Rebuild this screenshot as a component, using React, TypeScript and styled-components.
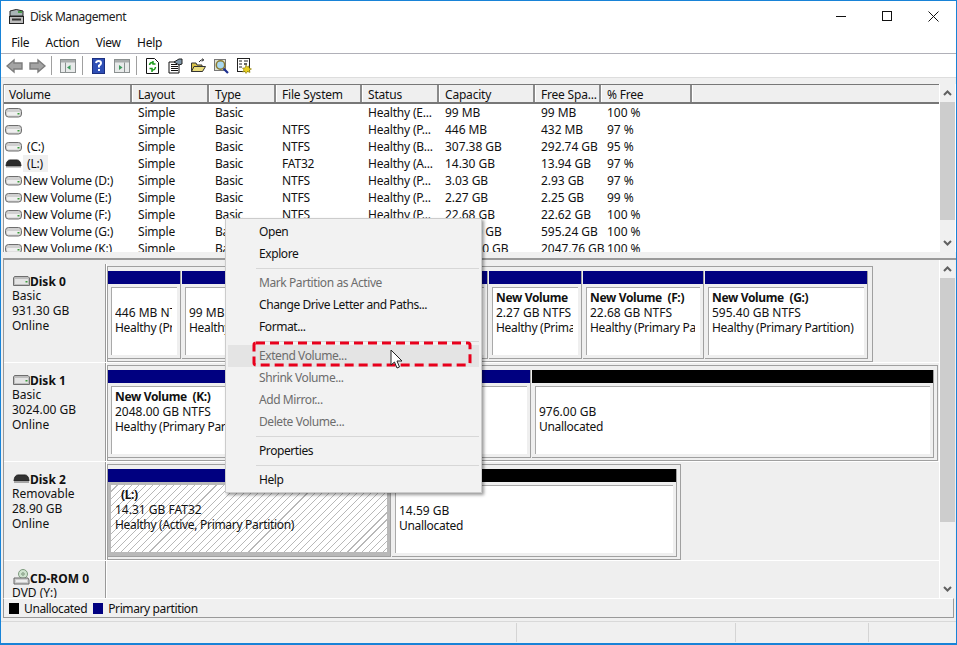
import React from "react";
import styled, { createGlobalStyle } from "styled-components";

const Global = createGlobalStyle`
  html, body { margin: 0; padding: 0; background: #fff; overflow: hidden; }
  #root { width: 957px; height: 645px; }
  * { box-sizing: border-box; }
`;
const UI = `"Noto Sans", "Open Sans", sans-serif`;

const Win = styled.div`
  position: relative; width: 957px; height: 645px; display: flex; flex-direction: column;
  border: 1px solid #1883d7; border-bottom-width: 2px; font-family: ${UI}; font-size: 12px; letter-spacing: -0.2px; color: #111; background: #f0f0f0; overflow: hidden;
`;
const TitleBar = styled.div`
  height: 30px; background: #fff; display: flex; align-items: center; padding: 0 0 0 7px; gap: 5px; flex: none;
`;
const TitleText = styled.span` flex: 1; color: #222; letter-spacing: -0.45px; `;
const WinBtns = styled.div` display: flex; flex: none; `;
const WinBtn = styled.div` width: 46px; height: 30px; flex: none; display: flex; align-items: center; justify-content: center; `;
const MenuBar = styled.div`
  height: 23px; background: #fff; display: flex; align-items: center; padding-left: 2px; flex: none; border-bottom: 1px solid #b0b0b8;
`;
const MenuItem = styled.span` padding: 0 8.2px; letter-spacing: -0.3px; `;
const ToolBar = styled.div`
  height: 23px; background: #fff; display: flex; align-items: center; padding-left: 5px; flex: none;
`;
const ToolSlot = styled.div<{ $l: number }>` margin-left: ${p => p.$l}px; display: flex; flex: none; `;
const ToolSep = styled.div<{ $l: number }>` width: 1px; height: 19px; background: #a0a0a0; margin-left: ${p => p.$l}px; flex: none; `;
const Gap = styled.div` height: 7px; background: #f0f0f0; border-top: 1px solid #ddd; flex: none; `;

const ListPane = styled.div` height: 168px; display: flex; flex: none; margin-left: 2px; border-left: 1px solid #999; background: #fff; `;
const ListMain = styled.div` flex: 1; display: flex; flex-direction: column; overflow: hidden; min-width: 0; `;
const Columns = `128px 77px 67px 86px 77px 96px 66px 91px 1fr`;
const HeadRow = styled.div`
  display: grid; grid-template-columns: ${Columns}; height: 20px; background: #efefef; border-top: 1px solid #777; border-bottom: 2px solid #777; flex: none;
`;
const HeadCell = styled.div`
  padding-left: 5px; line-height: 19px; border-right: 2px solid #8a8a8a; border-left: 1px solid #fff; white-space: nowrap; overflow: hidden;
  &:first-child { padding-left: 4px; }
  &:last-child { border-right: 0; }
`;
const Rows = styled.div` flex: 1; overflow: hidden; `;
const Row = styled.div`
  display: grid; grid-template-columns: ${Columns}; height: 17px; line-height: 17px; white-space: nowrap;
`;
const Cell = styled.div<{ $num?: boolean }>` padding-left: 6px; letter-spacing: ${p => (p.$num ? "-0.05px" : "-0.2px")}; `;
const VolCell = styled.div` display: flex; align-items: center; padding-left: 1px; overflow: hidden; `;
const VolName = styled.span<{ $sel?: boolean; $pad?: boolean }>`
  background: ${p => (p.$sel ? "#f0f0f0" : "transparent")};
  margin-left: 1px;
  padding: 0 ${p => (p.$sel ? "5px" : "0")} 0 ${p => (p.$pad ? "4px" : "0")};
`;
const Scroll = styled.div` width: 16px; flex: none; background: #f0f0f0; display: flex; flex-direction: column; margin-right: 1px; border-left: 1px solid #fff; `;
const ScrollBtn = styled.div` height: 18px; display: flex; align-items: center; justify-content: center; flex: none; `;
const Thumb = styled.div<{ $h: number }>` height: ${p => p.$h}px; background: #cdcdcd; flex: none; `;
const ScrollRest = styled.div` flex: 1; `;

const Splitter = styled.div` height: 8px; background: #f0f0f0; border-bottom: 2px solid #999; margin-left: 2px; flex: none; `;

const GraphPane = styled.div` height: 338px; display: flex; flex: none; margin-left: 2px; border-left: 1px solid #999; background: #efefef; `;
const GraphMain = styled.div` flex: 1; display: flex; flex-direction: column; overflow: hidden; min-width: 0; padding-top: 4px; `;
const Disk = styled.div<{ $h: number }>`
  height: ${p => p.$h}px; display: flex; flex: none; border-bottom: 1px solid #fff;
`;
const DiskInfo = styled.div`
  width: 102px; flex: none; padding: 9px 0 0 8px; line-height: 15px; border-right: 1px solid #999; box-shadow: 1px 0 0 #fff;
`;
const DiskName = styled.div` font-weight: 700; letter-spacing: 0; display: flex; align-items: center; margin-left: 1px; margin-top: 1px; margin-bottom: -1px; `;
const DiskLine = styled.div` letter-spacing: 0; `;
const DiskTrack = styled.div` flex: 1; padding: 2px 0 0 1px; display: flex; align-items: flex-start; min-width: 0; `;
const DiskFrame = styled.div<{ $w: number }>`
  width: ${p => p.$w}px; height: 96px; border: 1px solid #a0a0a0; display: flex; gap: 1px; padding: 4px 0 2px 0; flex: none;
`;
const Part = styled.div<{ $w: number }>`
  width: ${p => p.$w}px; flex: none; display: flex; flex-direction: column; border-right: 1px solid #a0a0a0; border-bottom: 1px solid #a0a0a0;
`;
const Bar = styled.div<{ $black?: boolean }>` height: 13px; background: ${p => (p.$black ? "#000" : "#000080")}; flex: none; `;
const PartBody = styled.div<{ $sel?: boolean }>`
  flex: 1; padding: 3px 3px ${p => (p.$sel ? "4px" : "3px")} 3px; display: flex; min-height: 0;
  background: ${p => (p.$sel ? "#b9b9b9" : "#efefef")};
`;
const PartInner = styled.div`
  flex: 1; min-width: 0; overflow: hidden; background-color: #fff; padding: 2px 5px 0 3px; line-height: 15px; white-space: nowrap;
  border-top: 1px solid #a9a9a9; border-left: 1px solid #a9a9a9;
`;
const HatchInner = styled.div`
  flex: 1; min-width: 0; overflow: hidden; padding: 2px 3px 0 4px; line-height: 15px; white-space: nowrap; background-color: #fff;
  background-image: repeating-linear-gradient(135deg, #fff 0, #fff 4.2px, #b8b8b8 4.2px, #b8b8b8 5px);
`;
const PartTitle = styled.div<{ $indent?: boolean }>` font-weight: 700; height: 15px; white-space: pre; letter-spacing: -0.35px; overflow: hidden; padding-left: ${p => (p.$indent ? "6px" : "0")}; `;
const PartLine = styled.div<{ $first?: boolean; $num?: boolean }>` margin-top: ${p => (p.$first ? "15px" : "0")}; overflow: hidden; letter-spacing: ${p => (p.$num ? "0" : "-0.3px")}; `;
const Legend = styled.div`
  height: 20px; background: #f0f0f0; display: flex; align-items: center; margin: 0 2px; padding-left: 5px; gap: 5px; border-left: 1px solid #999; border-right: 1px solid #999; border-bottom: 1px solid #999; border-top: 1px solid #fff; flex: none;
`;
const LegendText = styled.span` letter-spacing: -0.38px; margin-right: 1px; `;
const Swatch = styled.span<{ $c: string }>` width: 10px; height: 11px; background: ${p => p.$c}; display: inline-block; `;
const StatusBar = styled.div`
  flex: 1; background: #f0f0f0; display: flex; justify-content: flex-end; padding: 1px 2px 1px 0; border-top: 1px solid #d9d9d9; margin-top: 3px;
`;
const StatusCell = styled.div<{ $w: number }>` width: ${p => p.$w}px; border-left: 1px solid #d4d4d4; `;

const Menu = styled.div`
  position: absolute; left: 224px; top: 217px; width: 257px; height: 275px; background: #f2f2f2; border: 1px solid #ccc; box-shadow: 2px 2px 3px rgba(0,0,0,.4); padding: 2px; color: #111; letter-spacing: -0.42px;
`;
const MItem = styled.div<{ $off?: boolean; $hl?: boolean }>`
  height: 22px; line-height: 22px; padding-left: 31px; color: ${p => (p.$off ? "#6d6d6d" : "#111")}; background: ${p => (p.$hl ? "#e4e4e4" : "transparent")};
`;
const MSep = styled.div` height: 7px; margin-left: 28px; display: flex; align-items: center; &::after { content: ""; flex: 1; height: 1px; background: #d7d7d7; } `;
const Dash = styled.svg` position: absolute; left: 250px; top: 339px; `;
const Cursor = styled.svg` position: absolute; left: 389px; top: 348px; `;

const DriveIcon = ({ dark }: { dark?: boolean }) => (
  <svg width="17" height="11" viewBox="0 0 17 11" style={{ flex: "none" }}>
    {dark ? (
      <>
        <path d="M1 8 Q1.5 2 5 2 H12 Q15.5 2 16 8 Z" fill="#2b2b2b" stroke="#222" />
        <rect x="1" y="8" width="15" height="1.5" fill="#999" />
      </>
    ) : (
      <>
        <rect x=".5" y="1.5" width="16" height="8.5" rx="3" fill="#d0d0d0" stroke="#6e6e6e" />
        <rect x="2" y="5" width="13" height="3.5" rx="1" fill="#efefef" />
        <rect x="12.5" y="6" width="2" height="1.5" fill="#3b9b3b" />
      </>
    )}
  </svg>
);

const DiskIcon = ({ dark }: { dark?: boolean }) => (
  <svg width="17" height="11" viewBox="0 0 17 11" style={{ flex: "none" }}>
    {dark ? (
      <>
        <path d="M1 7 Q1.5 1 5 1 H12 Q15.5 1 16 7 Z" fill="#333" stroke="#222" />
        <rect x="1" y="7" width="15" height="2" fill="#a5a5a5" />
      </>
    ) : (
      <>
        <path d="M1.5 .5 H15 L16.5 2 V9.5 H.5 V2Z" fill="#bdbdbd" stroke="#6e6e6e" />
        <rect x="2" y="3" width="13" height="5" fill="#e4e4e4" />
        <rect x="12.5" y="5" width="2" height="1.5" fill="#3b9b3b" />
      </>
    )}
  </svg>
);

const CdIcon = () => (
  <svg width="17" height="16" viewBox="0 0 17 16" style={{ flex: "none", marginTop: -4 }}>
    <circle cx="10" cy="5" r="4.5" fill="#cfe3cf" stroke="#7d9a7d" />
    <circle cx="10" cy="5" r="1.2" fill="#fff" stroke="#6a8a6a" />
    <path d="M1 9 H15 L16 11 V15 H1Z" fill="#cfcfcf" stroke="#666" />
    <rect x="3" y="11" width="11" height="2" fill="#eee" />
  </svg>
);

const TitleIcon = () => (
  <svg width="17" height="17" viewBox="0 0 17 17">
    <path d="M2 3 Q8 0 15 3 V8 H2Z" fill="#a9b4b6" stroke="#222" />
    <rect x="10" y="3" width="4" height="2" fill="#4a9a4a" />
    <rect x="1.5" y="8.5" width="14" height="7" fill="#bdbdbd" stroke="#222" />
    <rect x="4" y="10.5" width="9" height="2" fill="#333" />
  </svg>
);

const ArrowL = () => (
  <svg width="17" height="16" viewBox="0 0 17 16"><path d="M1 8 L8 2 V5 H16 V11 H8 V14Z" fill="#a4a4a4" stroke="#7c7c7c" strokeWidth="1.4" /></svg>
);
const ArrowR = () => (
  <svg width="17" height="16" viewBox="0 0 17 16"><path d="M16 8 L9 2 V5 H1 V11 H9 V14Z" fill="#a4a4a4" stroke="#7c7c7c" strokeWidth="1.4" /></svg>
);
const PaneIcon = ({ right }: { right?: boolean }) => (
  <svg width="16" height="14" viewBox="0 0 16 14">
    <rect x=".5" y=".5" width="15" height="13" fill="#e8eaea" stroke="#8b9090" />
    <rect x="1" y="1" width="14" height="2.5" fill="#a9adad" />
    <rect x={right ? 10 : 5} y="3.5" width="1" height="10" fill="#8b9090" />
    <path d={right ? "M5 6 L8.5 8.5 L5 11Z" : "M10.5 6 L7 8.5 L10.5 11Z"} fill="#3d9a5e" />
  </svg>
);
const HelpIcon = () => (
  <svg width="13" height="16" viewBox="0 0 13 16">
    <rect x=".5" y=".5" width="12" height="15" fill="#2f4fb5" stroke="#1c2f80" />
    <path d="M4 5 Q4.5 3 6.5 3 Q9 3 9 5.2 Q9 6.6 7 7.6 V9.5 M7 11 V13" stroke="#fff" strokeWidth="2" fill="none" />
  </svg>
);
const RefreshIcon = () => (
  <svg width="13" height="16" viewBox="0 0 13 16">
    <path d="M.5 .5 H8.5 L12.5 4.5 V15.5 H.5Z" fill="#fff" stroke="#111" />
    <path d="M3.5 7 Q4 4 7 4.5 M7 3 V6 H9.5" stroke="#1c9b1c" strokeWidth="1.5" fill="none" />
    <path d="M9.5 9 Q9 12.5 6 12 M6 14 V10.5 H3.5" stroke="#1c9b1c" strokeWidth="1.5" fill="none" />
  </svg>
);
const PropsIcon = () => (
  <svg width="15" height="16" viewBox="0 0 15 16">
    <path d="M1 4 H9 L11 6 V15 H1Z" fill="#fff" stroke="#111" />
    <path d="M3 6.5 H9 M3 8.5 H10 M3 10.5 H10 M3 12.5 H10" stroke="#111" />
    <path d="M6 4 L11 1 L14 1 L14 6 L11 7Z" fill="#7f96a8" stroke="#222" />
  </svg>
);
const FolderIcon = () => (
  <svg width="15" height="15" viewBox="0 0 15 15">
    <path d="M.5 5 H5 L6 7 H11 V13.5 H.5Z" fill="#d9c34a" stroke="#333" />
    <path d="M3 8.5 H14.5 L11.5 13.5 H.5Z" fill="#e9dc7c" stroke="#333" />
    <path d="M8 4 Q10 1 12.5 2 L11.5 .5 M12.5 2 L11 3.5" stroke="#222" fill="none" />
  </svg>
);
const SearchIcon = () => (
  <svg width="15" height="16" viewBox="0 0 15 16">
    <rect x=".5" y="1.5" width="11" height="11" fill="#dfe3d0" stroke="#777" />
    <circle cx="6.5" cy="7" r="4.2" fill="#a8d8f0" stroke="#8a7a30" strokeWidth="1.5" />
    <path d="M9.5 10.5 L14 15" stroke="#1c2f90" strokeWidth="2.2" />
  </svg>
);
const SettingsIcon = () => (
  <svg width="15" height="16" viewBox="0 0 15 16">
    <rect x=".5" y=".5" width="12" height="13" fill="#fff" stroke="#222" />
    <path d="M2 3 H5 M7 3 H11 M2 6 H5 M2 9 H5" stroke="#222" />
    <rect x="7" y="5" width="3" height="2" fill="#666" />
    <path d="M9 7 L10 9 L12 8 L12 10 L14.5 11 L12.5 12 L13 14.5 L10.5 13.5 L9 15.5 L8 13.5 L5.5 14 L7 12 L5.5 10 L8 10Z" fill="#e8d020" stroke="#887a10" strokeWidth=".6" />
  </svg>
);

const rows: [string, string, string, string, string, string, string, string][] = [
  ["", "Simple", "Basic", "", "Healthy (E...", "99 MB", "99 MB", "100 %"],
  ["", "Simple", "Basic", "NTFS", "Healthy (P...", "446 MB", "432 MB", "97 %"],
  ["(C:)", "Simple", "Basic", "NTFS", "Healthy (B...", "307.38 GB", "292.74 GB", "95 %"],
  ["(L:)", "Simple", "Basic", "FAT32", "Healthy (A...", "14.30 GB", "13.94 GB", "97 %"],
  ["New Volume (D:)", "Simple", "Basic", "NTFS", "Healthy (P...", "3.03 GB", "2.93 GB", "97 %"],
  ["New Volume (E:)", "Simple", "Basic", "NTFS", "Healthy (P...", "2.27 GB", "2.25 GB", "99 %"],
  ["New Volume (F:)", "Simple", "Basic", "NTFS", "Healthy (P...", "22.68 GB", "22.62 GB", "100 %"],
  ["New Volume (G:)", "Simple", "Basic", "NTFS", "Healthy (P...", "595.40 GB", "595.24 GB", "100 %"],
  ["New Volume (K:)", "Simple", "Basic", "NTFS", "Healthy (P...", "2048.00 GB", "2047.76 GB", "100 %"],
];
const heads = ["Volume", "Layout", "Type", "File System", "Status", "Capacity", "Free Spa...", "% Free", ""];

const Up = () => <svg width="9" height="6" viewBox="0 0 9 6"><path d="M1 5 L4.5 1.5 L8 5" stroke="#606060" strokeWidth="2" fill="none" /></svg>;
const Down = () => <svg width="9" height="6" viewBox="0 0 9 6"><path d="M1 1 L4.5 4.5 L8 1" stroke="#606060" strokeWidth="2" fill="none" /></svg>;

type P = { w: number; title?: string; l1: string; l2: string; black?: boolean };
const disk0: P[] = [
  { w: 73, l1: "446 MB NTFS", l2: "Healthy (Primary Partition)" },
  { w: 73, l1: "99 MB", l2: "Healthy (EFI)" },
  { w: 131, title: "(C:)", l1: "307.38 GB NTFS", l2: "Healthy (Boot)" },
  { w: 100, title: "New Volume (D:)", l1: "3.03 GB NTFS", l2: "Healthy" },
  { w: 93, title: "New Volume", l1: "2.27 GB NTFS", l2: "Healthy (Primary Partition)" },
  { w: 121, title: "New Volume  (F:)", l1: "22.68 GB NTFS", l2: "Healthy (Primary Partition)" },
  { w: 163, title: "New Volume  (G:)", l1: "595.40 GB NTFS", l2: "Healthy (Primary Partition)" },
];
const disk1: P[] = [
  { w: 423, title: "New Volume  (K:)", l1: "2048.00 GB NTFS", l2: "Healthy (Primary Partition)" },
  { w: 402, black: true, l1: "976.00 GB", l2: "Unallocated" },
];

const Partition = ({ p }: { p: P }) => (
  <Part $w={p.w}>
    <Bar $black={p.black} />
    <PartBody>
      <PartInner>
        {p.title ? <PartTitle>{p.title}</PartTitle> : null}
        <PartLine $first={!p.title} $num>{p.l1}</PartLine>
        <PartLine>{p.l2}</PartLine>
      </PartInner>
    </PartBody>
  </Part>
);

export default function App() {
  return (
    <Win>
      <Global />
      <TitleBar>
        <TitleIcon />
        <TitleText>Disk Management</TitleText>
        <WinBtns>
          <WinBtn><svg width="10" height="1"><rect width="10" height="1" fill="#111" /></svg></WinBtn>
          <WinBtn><svg width="10" height="10"><rect x=".5" y=".5" width="9" height="9" fill="none" stroke="#111" /></svg></WinBtn>
          <WinBtn><svg width="11" height="11"><path d="M.5 .5 L10.5 10.5 M10.5 .5 L.5 10.5" stroke="#111" /></svg></WinBtn>
        </WinBtns>
      </TitleBar>
      <MenuBar>
        <MenuItem>File</MenuItem><MenuItem>Action</MenuItem><MenuItem>View</MenuItem><MenuItem>Help</MenuItem>
      </MenuBar>
      <ToolBar>
        <ToolSlot $l={0}><ArrowL /></ToolSlot>
        <ToolSlot $l={6}><ArrowR /></ToolSlot>
        <ToolSep $l={5} />
        <ToolSlot $l={8}><PaneIcon /></ToolSlot>
        <ToolSep $l={6} />
        <ToolSlot $l={9}><HelpIcon /></ToolSlot>
        <ToolSlot $l={9}><PaneIcon right /></ToolSlot>
        <ToolSep $l={6} />
        <ToolSlot $l={9}><RefreshIcon /></ToolSlot>
        <ToolSlot $l={9}><PropsIcon /></ToolSlot>
        <ToolSlot $l={8}><FolderIcon /></ToolSlot>
        <ToolSlot $l={8}><SearchIcon /></ToolSlot>
        <ToolSlot $l={8}><SettingsIcon /></ToolSlot>
      </ToolBar>
      <Gap />
      <ListPane>
        <ListMain>
          <HeadRow>{heads.map((h, i) => <HeadCell key={i}>{h}</HeadCell>)}</HeadRow>
          <Rows>
            {rows.map((r, i) => (
              <Row key={i}>
                <VolCell>
                  <DriveIcon dark={r[0] === "(L:)"} />
                  <VolName $sel={r[0] === "(L:)"} $pad={r[0].startsWith("(")}>{r[0]}</VolName>
                </VolCell>
                {r.slice(1).map((c, j) => <Cell key={j} $num={j >= 4}>{c}</Cell>)}
                <Cell />
              </Row>
            ))}
          </Rows>
        </ListMain>
        <Scroll>
          <ScrollBtn><Up /></ScrollBtn>
          <Thumb $h={118} />
          <ScrollRest />
          <ScrollBtn><Down /></ScrollBtn>
        </Scroll>
      </ListPane>
      <Splitter />
      <GraphPane>
        <GraphMain>
          <Disk $h={99}>
            <DiskInfo>
              <DiskName><DiskIcon />Disk 0</DiskName>
              <DiskLine>Basic</DiskLine><DiskLine>931.30 GB</DiskLine><DiskLine>Online</DiskLine>
            </DiskInfo>
            <DiskTrack>
              <DiskFrame $w={766}>{disk0.map((p, i) => <Partition key={i} p={p} />)}</DiskFrame>
            </DiskTrack>
          </Disk>
          <Disk $h={99}>
            <DiskInfo>
              <DiskName><DiskIcon />Disk 1</DiskName>
              <DiskLine>Basic</DiskLine><DiskLine>3024.00 GB</DiskLine><DiskLine>Online</DiskLine>
            </DiskInfo>
            <DiskTrack>
              <DiskFrame $w={831}>{disk1.map((p, i) => <Partition key={i} p={p} />)}</DiskFrame>
            </DiskTrack>
          </Disk>
          <Disk $h={99}>
            <DiskInfo>
              <DiskName><DiskIcon dark />Disk 2</DiskName>
              <DiskLine>Removable</DiskLine><DiskLine>28.90 GB</DiskLine><DiskLine>Online</DiskLine>
            </DiskInfo>
            <DiskTrack>
              <DiskFrame $w={574}>
                <Part $w={283}>
                  <Bar />
                  <PartBody $sel>
                    <HatchInner>
                      <PartTitle $indent>(L:)</PartTitle>
                      <PartLine $num>14.31 GB FAT32</PartLine>
                      <PartLine>Healthy (Active, Primary Partition)</PartLine>
                    </HatchInner>
                  </PartBody>
                </Part>
                <Partition p={{ w: 285, black: true, l1: "14.59 GB", l2: "Unallocated" }} />
              </DiskFrame>
            </DiskTrack>
          </Disk>
          <Disk $h={42}>
            <DiskInfo>
              <DiskName><CdIcon />CD-ROM 0</DiskName>
              <DiskLine>DVD (Y:)</DiskLine>
            </DiskInfo>
            <DiskTrack />
          </Disk>
        </GraphMain>
        <Scroll>
          <ScrollBtn><Up /></ScrollBtn>
          <Thumb $h={244} />
          <ScrollRest />
          <ScrollBtn><Down /></ScrollBtn>
        </Scroll>
      </GraphPane>
      <Legend>
        <Swatch $c="#000" /><LegendText>Unallocated</LegendText>
        <Swatch $c="#000080" /><LegendText>Primary partition</LegendText>
      </Legend>
      <StatusBar>
        <StatusCell $w={219} /><StatusCell $w={133} /><StatusCell $w={86} />
      </StatusBar>
      <Menu>
        <MItem>Open</MItem>
        <MItem>Explore</MItem>
        <MSep />
        <MItem $off>Mark Partition as Active</MItem>
        <MItem>Change Drive Letter and Paths...</MItem>
        <MItem>Format...</MItem>
        <MSep />
        <MItem $off $hl>Extend Volume...</MItem>
        <MItem $off>Shrink Volume...</MItem>
        <MItem $off>Add Mirror...</MItem>
        <MItem $off>Delete Volume...</MItem>
        <MSep />
        <MItem>Properties</MItem>
        <MSep />
        <MItem>Help</MItem>
      </Menu>
      <Dash width="222" height="28" viewBox="0 0 222 28">
        <rect x="3" y="3" width="216" height="22" rx="2" fill="none" stroke="#e8001c" strokeWidth="3" strokeDasharray="9 5" />
      </Dash>
      <Cursor width="14" height="20" viewBox="0 0 14 20">
        <path d="M1 1 V16 L4.5 13 L7 19 L9.5 18 L7 12 H12Z" fill="#fff" stroke="#222" />
      </Cursor>
    </Win>
  );
}
